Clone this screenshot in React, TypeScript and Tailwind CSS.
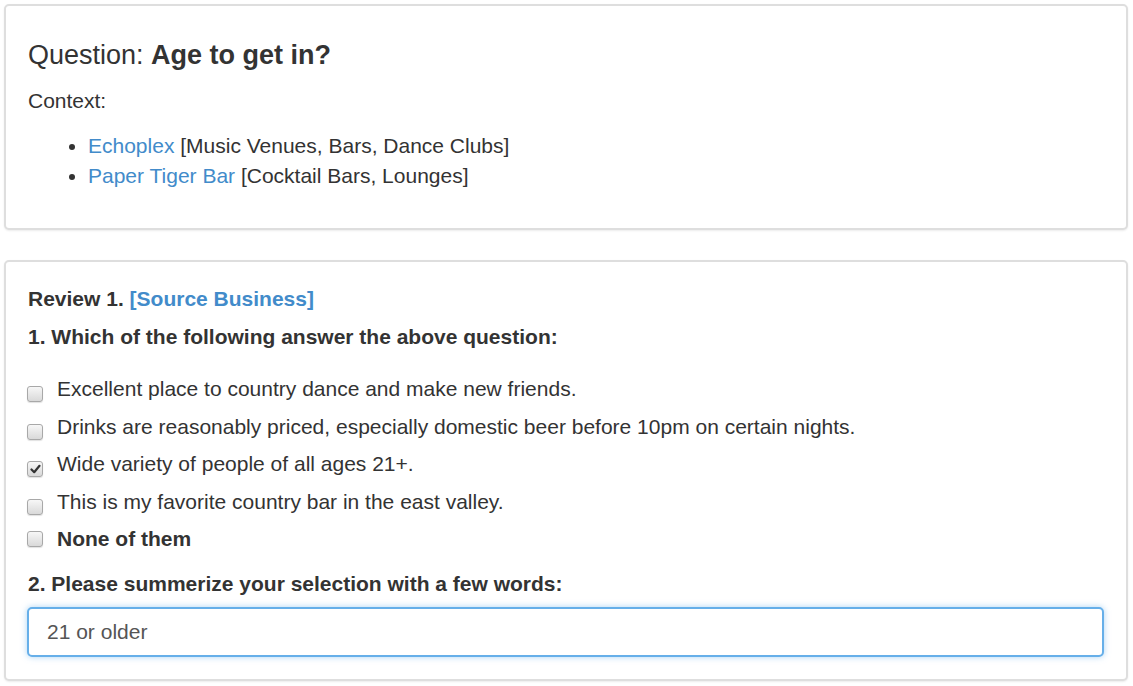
const options = [
  { text: "Excellent place to country dance and make new friends.", checked: false },
  { text: "Drinks are reasonably priced, especially domestic beer before 10pm on certain nights.", checked: false },
  { text: "Wide variety of people of all ages 21+.", checked: true },
  { text: "This is my favorite country bar in the east valley.", checked: false },
];

const Box = ({ checked, className }: { checked?: boolean; className?: string }) => (
  <span
    className={
      "flex h-[16px] w-[16px] shrink-0 items-center justify-center rounded-[3px] border border-[#a8a8a8] bg-gradient-to-b from-[#f7f7f7] to-[#d9d9d9] shadow-[0_1px_1px_rgba(0,0,0,0.12)] " +
      (className ?? "")
    }
  >
    {checked && (
      <svg width="11" height="10" viewBox="0 0 11 10">
        <path d="M1.5 5.5 L4.2 8.2 L9.5 1.8" fill="none" stroke="#333" strokeWidth="2.2" strokeLinecap="round" strokeLinejoin="round" />
      </svg>
    )}
  </span>
);

const Panel = ({ className, children }: { className?: string; children: React.ReactNode }) => (
  <div
    className={
      "rounded-[5px] border-2 border-[#dedede] bg-white px-[22px] shadow-[0_1px_2px_rgba(0,0,0,0.08)] " +
      (className ?? "")
    }
  >
    {children}
  </div>
);

export default function App() {
  return (
    <div className="min-h-[686px] bg-white pl-[4px] pr-[5px] pt-[4px] font-['Liberation_Sans',Arial,sans-serif] text-[21px] leading-[30px] text-[#333]">
      <Panel className="pb-[37px] pt-[34px]">
        <h3 className="text-[27px] leading-[30px]">
          Question: <b>Age to get in?</b>
        </h3>
        <p className="mt-[16px]">Context:</p>
        <ul className="mt-[15px] list-disc pl-[60px]">
          <li>
            <a href="#" className="text-[#428bca]">Echoplex</a> [Music Venues, Bars, Dance Clubs]
          </li>
          <li>
            <a href="#" className="text-[#428bca]">Paper Tiger Bar</a> [Cocktail Bars, Lounges]
          </li>
        </ul>
      </Panel>

      <Panel className="mt-[30px] pb-[22px] pt-[22px]">
        <p className="font-bold">
          Review 1. <a href="#" className="text-[#428bca]">[Source Business]</a>
        </p>
        <p className="mt-[8px] font-bold">1. Which of the following answer the above question:</p>

        <div className="mt-[22px] flex flex-col gap-[7.5px]">
          {options.map((o) => (
            <label key={o.text} className="flex items-start gap-[14px]">
              <Box checked={o.checked} className="-ml-px mt-[12px]" />
              <span>{o.text}</span>
            </label>
          ))}
          <label className="flex items-center gap-[14px]">
            <Box className="-ml-px" />
            <span className="font-bold">None of them</span>
          </label>
        </div>

        <p className="mt-[15px] font-bold">2. Please summerize your selection with a few words:</p>
        <div className="-ml-px mt-[8px] flex h-[50px] items-center rounded-[5px] border-2 border-[#66afe9] bg-white px-[18px] text-[#555] shadow-[0_0_6px_rgba(102,175,233,0.55)]">
          21 or older
        </div>
      </Panel>
    </div>
  );
}
